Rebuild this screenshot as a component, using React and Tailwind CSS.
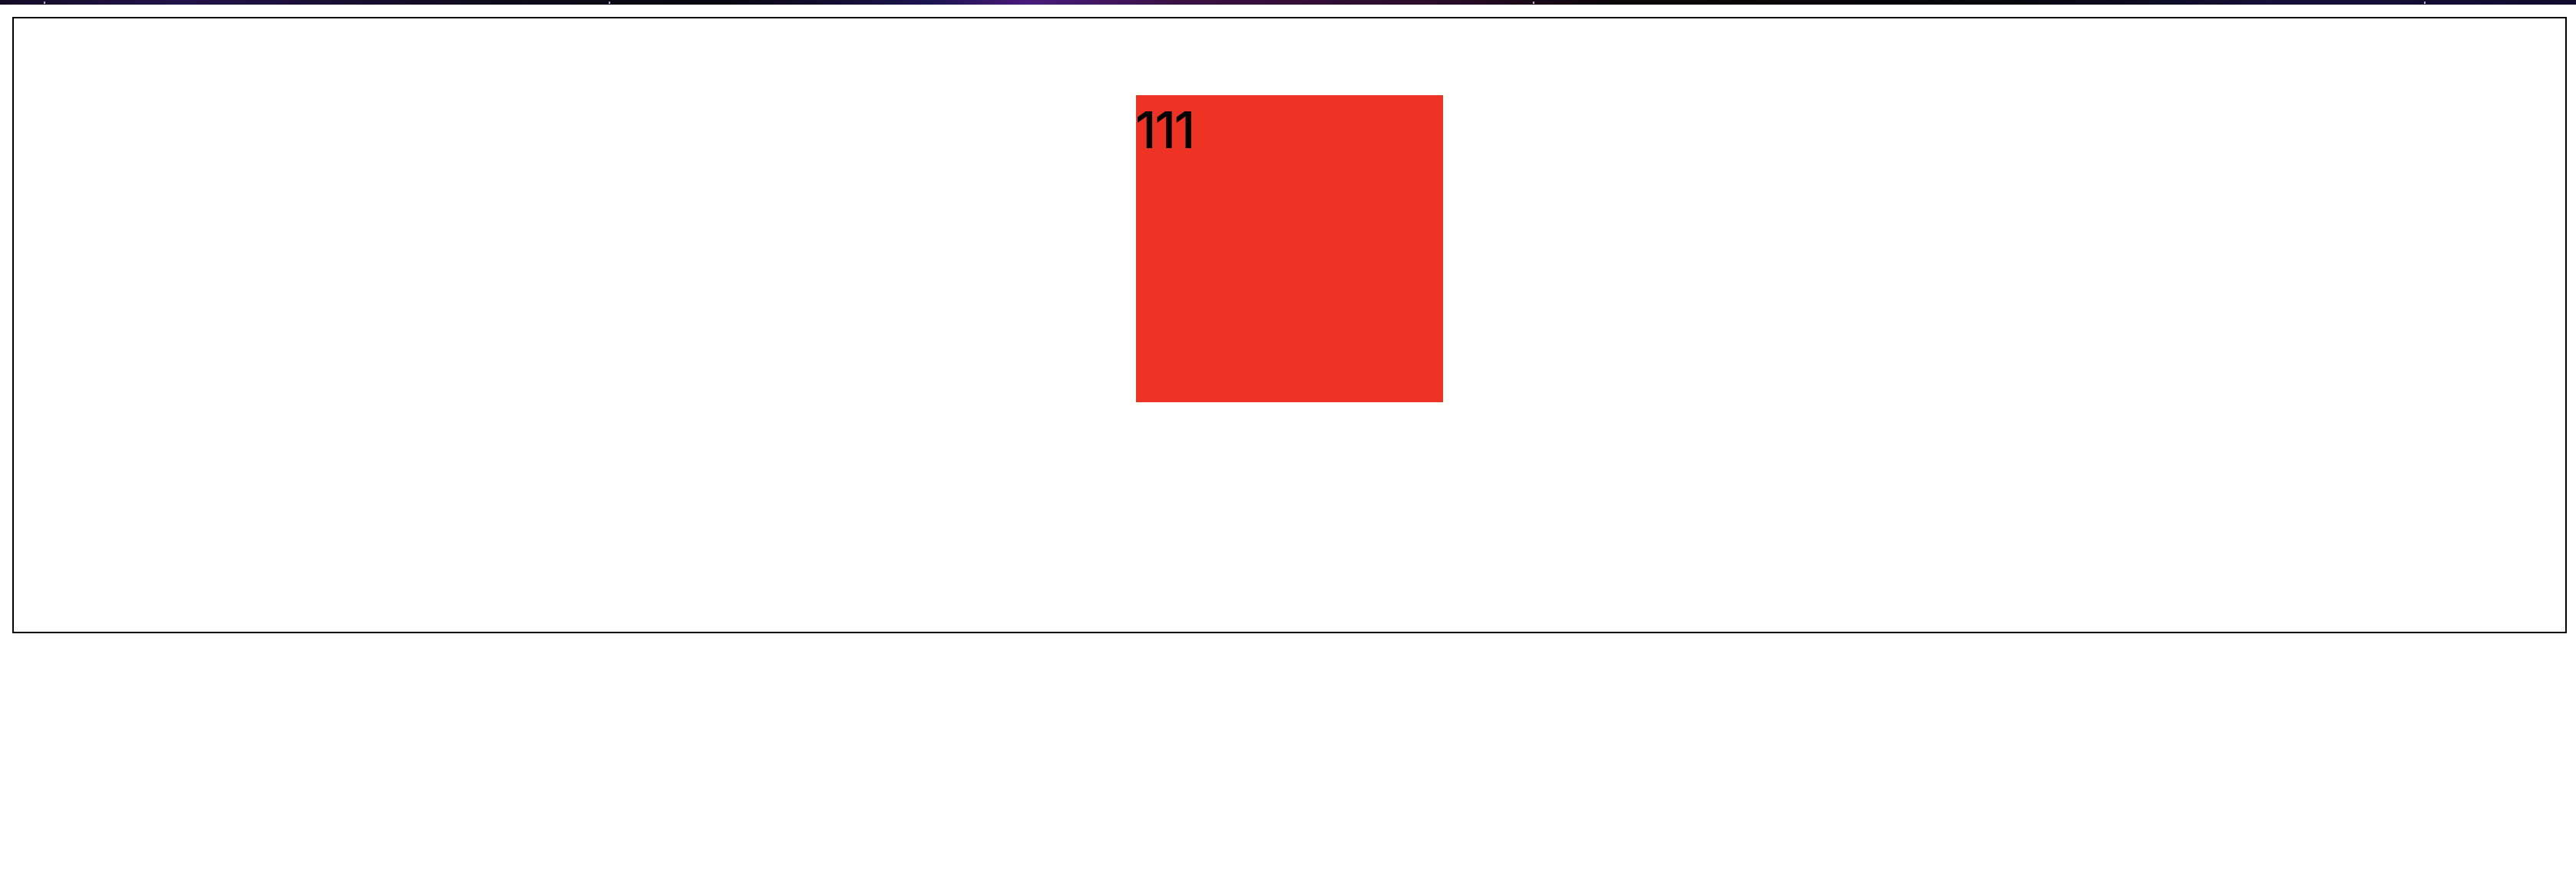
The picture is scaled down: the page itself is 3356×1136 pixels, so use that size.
import React from 'react';

const STARS = [57, 793, 1997, 3158];

export default function App() {
  return (
    <div className="min-h-screen bg-white font-[family-name:Inter,Liberation_Sans,sans-serif]">
      {/* thin starry banner */}
      <div className="relative h-[6px] bg-[linear-gradient(90deg,#140c26_0%,#22124a_7%,#0e0a18_20%,#0a0610_28%,#1c1450_36%,#4a1a7c_40%,#3a1042_46%,#2a0c28_56%,#0a0508_63%,#08060c_78%,#141038_88%,#100c30_100%)]">
        {STARS.map((x) => (
          <span key={x} className="absolute top-[2px] w-[2px] h-[3px] bg-[#b8b0c8]" style={{ left: x }} />
        ))}
      </div>

      <div className="ml-[16px] mt-[16px] w-[3328px] h-[803px] border-2 border-black">
        <div className="mx-auto mt-[100px] w-[400px] h-[400px] bg-[#ee3324]">
          <div className="pt-[12px] -ml-[1px] text-[66px] font-medium leading-none tracking-[-2px] text-black">111</div>
        </div>
      </div>
    </div>
  );
}
